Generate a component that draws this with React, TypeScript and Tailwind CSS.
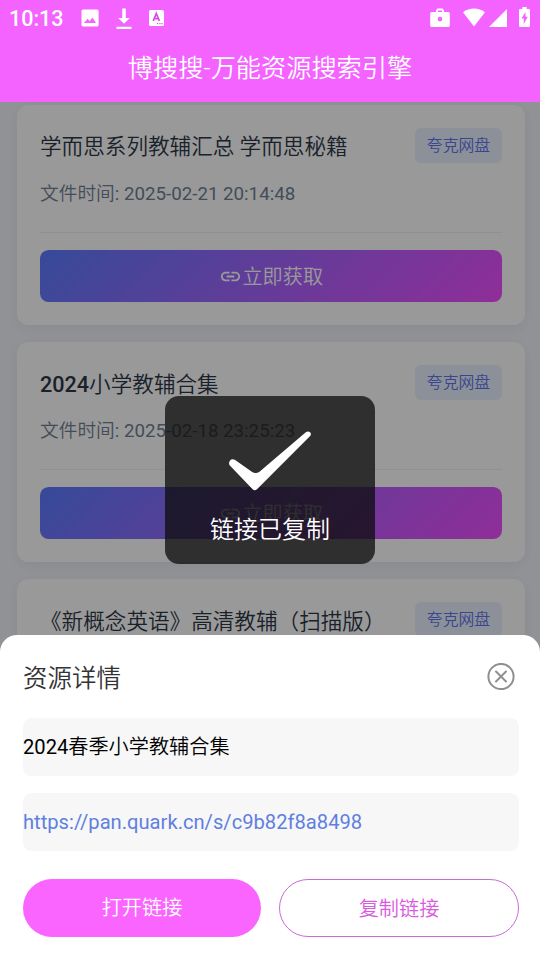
import type { ReactNode } from "react";

const FONT = "font-[Roboto,'Noto_Sans_CJK_SC',sans-serif]";

function StatusBar() {
  return (
    <div className="flex h-9 items-center pl-[9px] pr-[10px] text-white">
      <span className="w-[72px] pt-[2px] text-[21.5px] leading-none font-medium">10:13</span>
      <svg className="h-[18px] w-[18px]" viewBox="0 0 18 18" fill="currentColor">
        <path fillRule="evenodd" d="M2 .5h14A1.6 1.6 0 0 1 17.600 2v14A1.600 1.600 0 0 1 16 17.500H2A1.600 1.600 0 0 1 .500 16V2A1.600 1.600 0 0 1 2 .500ZM3 14h12l-3.600-5.500-2.800 3.800-2-2.500Z" />
      </svg>
      <svg className="ml-[17px] mt-[1px] h-[22px] w-[16px]" viewBox="0 0 16 22" fill="currentColor">
        <path d="M6.200 .500h3.600v9.500h4L8 15.800 2.200 10h4ZM.500 18.800h15v2.200H.500Z" />
      </svg>
      <svg className="ml-[17px] h-4 w-[15px]" viewBox="0 0 15 16">
        <rect width="15" height="16" rx="1.500" fill="#fff" />
        <path d="M4.200 11 7.300 3.500 10.400 11M5.300 8.700h4" fill="none" stroke="#d94fe4" strokeWidth="1.800" />
        <path d="M8 13.700h1.200M10.300 13.700h1.200M12.500 13.700h1.200" stroke="#d94fe4" strokeWidth="1.200" />
      </svg>
      <div className="flex-1" />
      <svg className="h-5 w-5" viewBox="0 0 20 20" fill="currentColor">
        <path fillRule="evenodd" d="M6 4V2.300L7.600.500h4.800L14 2.300V4h4.200A1.600 1.600 0 0 1 19.800 5.600v11.800A1.600 1.600 0 0 1 18.200 19H1.800A1.600 1.600 0 0 1 .200 17.400V5.600A1.600 1.600 0 0 1 1.800 4ZM8 4h4V2.500H8ZM10 8.800a2.300 2.300 0 1 0 0 4.600 2.300 2.300 0 0 0 0-4.600Z" />
      </svg>
      <svg className="ml-[13px] mb-[1px] h-[19px] w-[22px]" viewBox="0 0 22 19" fill="currentColor">
        <path d="M0 4.200C6.500-.700 15.500-.700 22 4.200L11 18.500Z" />
      </svg>
      <svg className="ml-[4px] h-[18px] w-[18px]" viewBox="0 0 18 18" fill="currentColor">
        <path d="M18 0v18H0Z" />
      </svg>
      <svg className="ml-[12px] mb-[2px] h-[20px] w-[11px]" viewBox="0 0 11 20" fill="currentColor">
        <path fillRule="evenodd" d="M3.300 0h4.400v2H10a1 1 0 0 1 1 1v16a1 1 0 0 1-1 1H1a1 1 0 0 1-1-1V3a1 1 0 0 1 1-1h2.300ZM6.500 5 2.500 11.500h2.300V17l3.900-7.300H6.500Z" />
      </svg>
    </div>
  );
}

function ResourceCard({ title, time }: { title: ReactNode; time?: string }) {
  return (
    <article className="h-[220px] shrink-0 rounded-[11.5px] bg-white px-[23px] pt-[23px] shadow-[0_3px_14px_rgba(0,0,0,0.06)]">
      <div className="flex h-[35px] items-center justify-between">
        <h2 className="pt-[2.8px] text-[21.6px] leading-[35px] font-[350] whitespace-nowrap text-[#2d3748]">{title}</h2>
        <span className="h-[35px] w-[87px] rounded-[6px] bg-[#e9f1ff] text-center text-[15.84px] leading-[36px] font-[350] text-[#5f74ee]">
          夸克网盘
        </span>
      </div>
      {time && (
        <>
          <p className="mt-[18px] h-[27px] text-[18.72px] leading-[27px] text-[#718096]">
            <span className="font-[350]">文件时间</span>: {time}
          </p>
          <div className="mt-[24px] border-t border-[#edf2f7] pt-[17px]">
            <button className="flex h-[52px] w-full items-center justify-center rounded-[8.6px] bg-[linear-gradient(135deg,#5b7cff,#ef4dff)] text-[20.16px] text-white">
              <svg className="mr-[0.5px] h-[23px] w-[23px]" viewBox="0 0 24 24" fill="currentColor">
                <path d="M3.900 12c0-1.710 1.390-3.100 3.100-3.100h4V7H7c-2.760 0-5 2.240-5 5s2.240 5 5 5h4v-1.900H7c-1.710 0-3.100-1.390-3.100-3.100zM8 13h8v-2H8v2zm9-6h-4v1.900h4c1.710 0 3.100 1.390 3.100 3.100s-1.390 3.100-3.100 3.100h-4V17h4c2.760 0 5-2.240 5-5s-2.240-5-5-5z" />
              </svg>
              <span className="pt-[2px] font-[350]">立即获取</span>
            </button>
          </div>
        </>
      )}
    </article>
  );
}

function DetailSheet() {
  return (
    <section className="absolute inset-x-0 bottom-0 flex h-[325px] flex-col rounded-t-[17px] bg-white pr-[21px] pl-[23px]">
      <div className="mt-[24px] flex h-9 items-center justify-between pr-[4px]">
        <h2 className="pt-[4px] text-[24.48px] leading-9 font-[350] text-[#333]">资源详情</h2>
        <svg className="h-7 w-7" viewBox="0 0 28 28" fill="none" stroke="#8f8f8f" strokeWidth="2" strokeLinecap="round">
          <circle cx="14" cy="13.500" r="12.600" />
          <path d="m9 8.500 10 10m0-10-10 10" />
        </svg>
      </div>
      <div className="mt-[23px] h-[58px] rounded-[8.6px] bg-[#f7f7f7] text-[20.16px] leading-[58px] text-black">
        2024<span className="font-[350]">春季小学教辅合集</span>
      </div>
      <div className="mt-[17px] h-[58px] rounded-[8.6px] bg-[#f7f7f7] text-[20.16px] leading-[58px] text-[#607fdf]">
        https://pan.quark.cn/s/c9b82f8a8498
      </div>
      <div className="mt-[28px] flex gap-[18px] text-[20.16px] font-[350]">
        <button className="h-[58px] w-[238px] rounded-full bg-[#fa64ff] text-white">打开链接</button>
        <button className="h-[58px] w-[240px] rounded-full border border-[#c96bd6] pt-[2px] text-[#d95ae0]">复制链接</button>
      </div>
    </section>
  );
}

function Toast() {
  return (
    <div className="absolute top-[396px] left-[165px] flex h-[168px] w-[210px] flex-col items-center rounded-[14px] bg-[rgba(12,12,12,0.75)] text-white">
      <svg className="mt-[34px] h-[62px] w-[84px]" viewBox="0 0 84 62" fill="currentColor">
        <path d="M1.600 35.200C-.200 32 2.800 27.400 6.800 29.800L23.800 41.700Q27.500 44.200 31.200 42L77.800 2.200C80.800 0 84.200 2.600 82.400 5.800L29 59.200Q26.800 61.200 24.600 59.200Z" />
      </svg>
      <p className="mt-[20px] text-[24px] leading-9 font-[350]">链接已复制</p>
    </div>
  );
}

export default function App() {
  return (
    <main className={`relative flex h-[960px] w-[540px] flex-col overflow-hidden bg-[#f2f4fa] ${FONT}`}>
      <header className="h-[102px] shrink-0 bg-[#f463ff]">
        <StatusBar />
        <h1 className="mt-[15px] text-center text-[25.2px] leading-9 font-[350] text-white">博搜搜-万能资源搜索引擎</h1>
      </header>
      <div className="relative flex min-h-0 flex-1 flex-col gap-[17.15px] overflow-hidden pt-[3px] pr-[15px] pl-[17px]">
        <ResourceCard title="学而思系列教辅汇总 学而思秘籍" time="2025-02-21 20:14:48" />
        <ResourceCard
          title={
            <>
              <span className="font-medium">2024</span>小学教辅合集
            </>
          }
          time="2025-02-18 23:25:23"
        />
        <ResourceCard title="《新概念英语》高清教辅（扫描版）" />
        <div className="absolute inset-0 bg-black/40" />
      </div>
      <DetailSheet />
      <Toast />
    </main>
  );
}
